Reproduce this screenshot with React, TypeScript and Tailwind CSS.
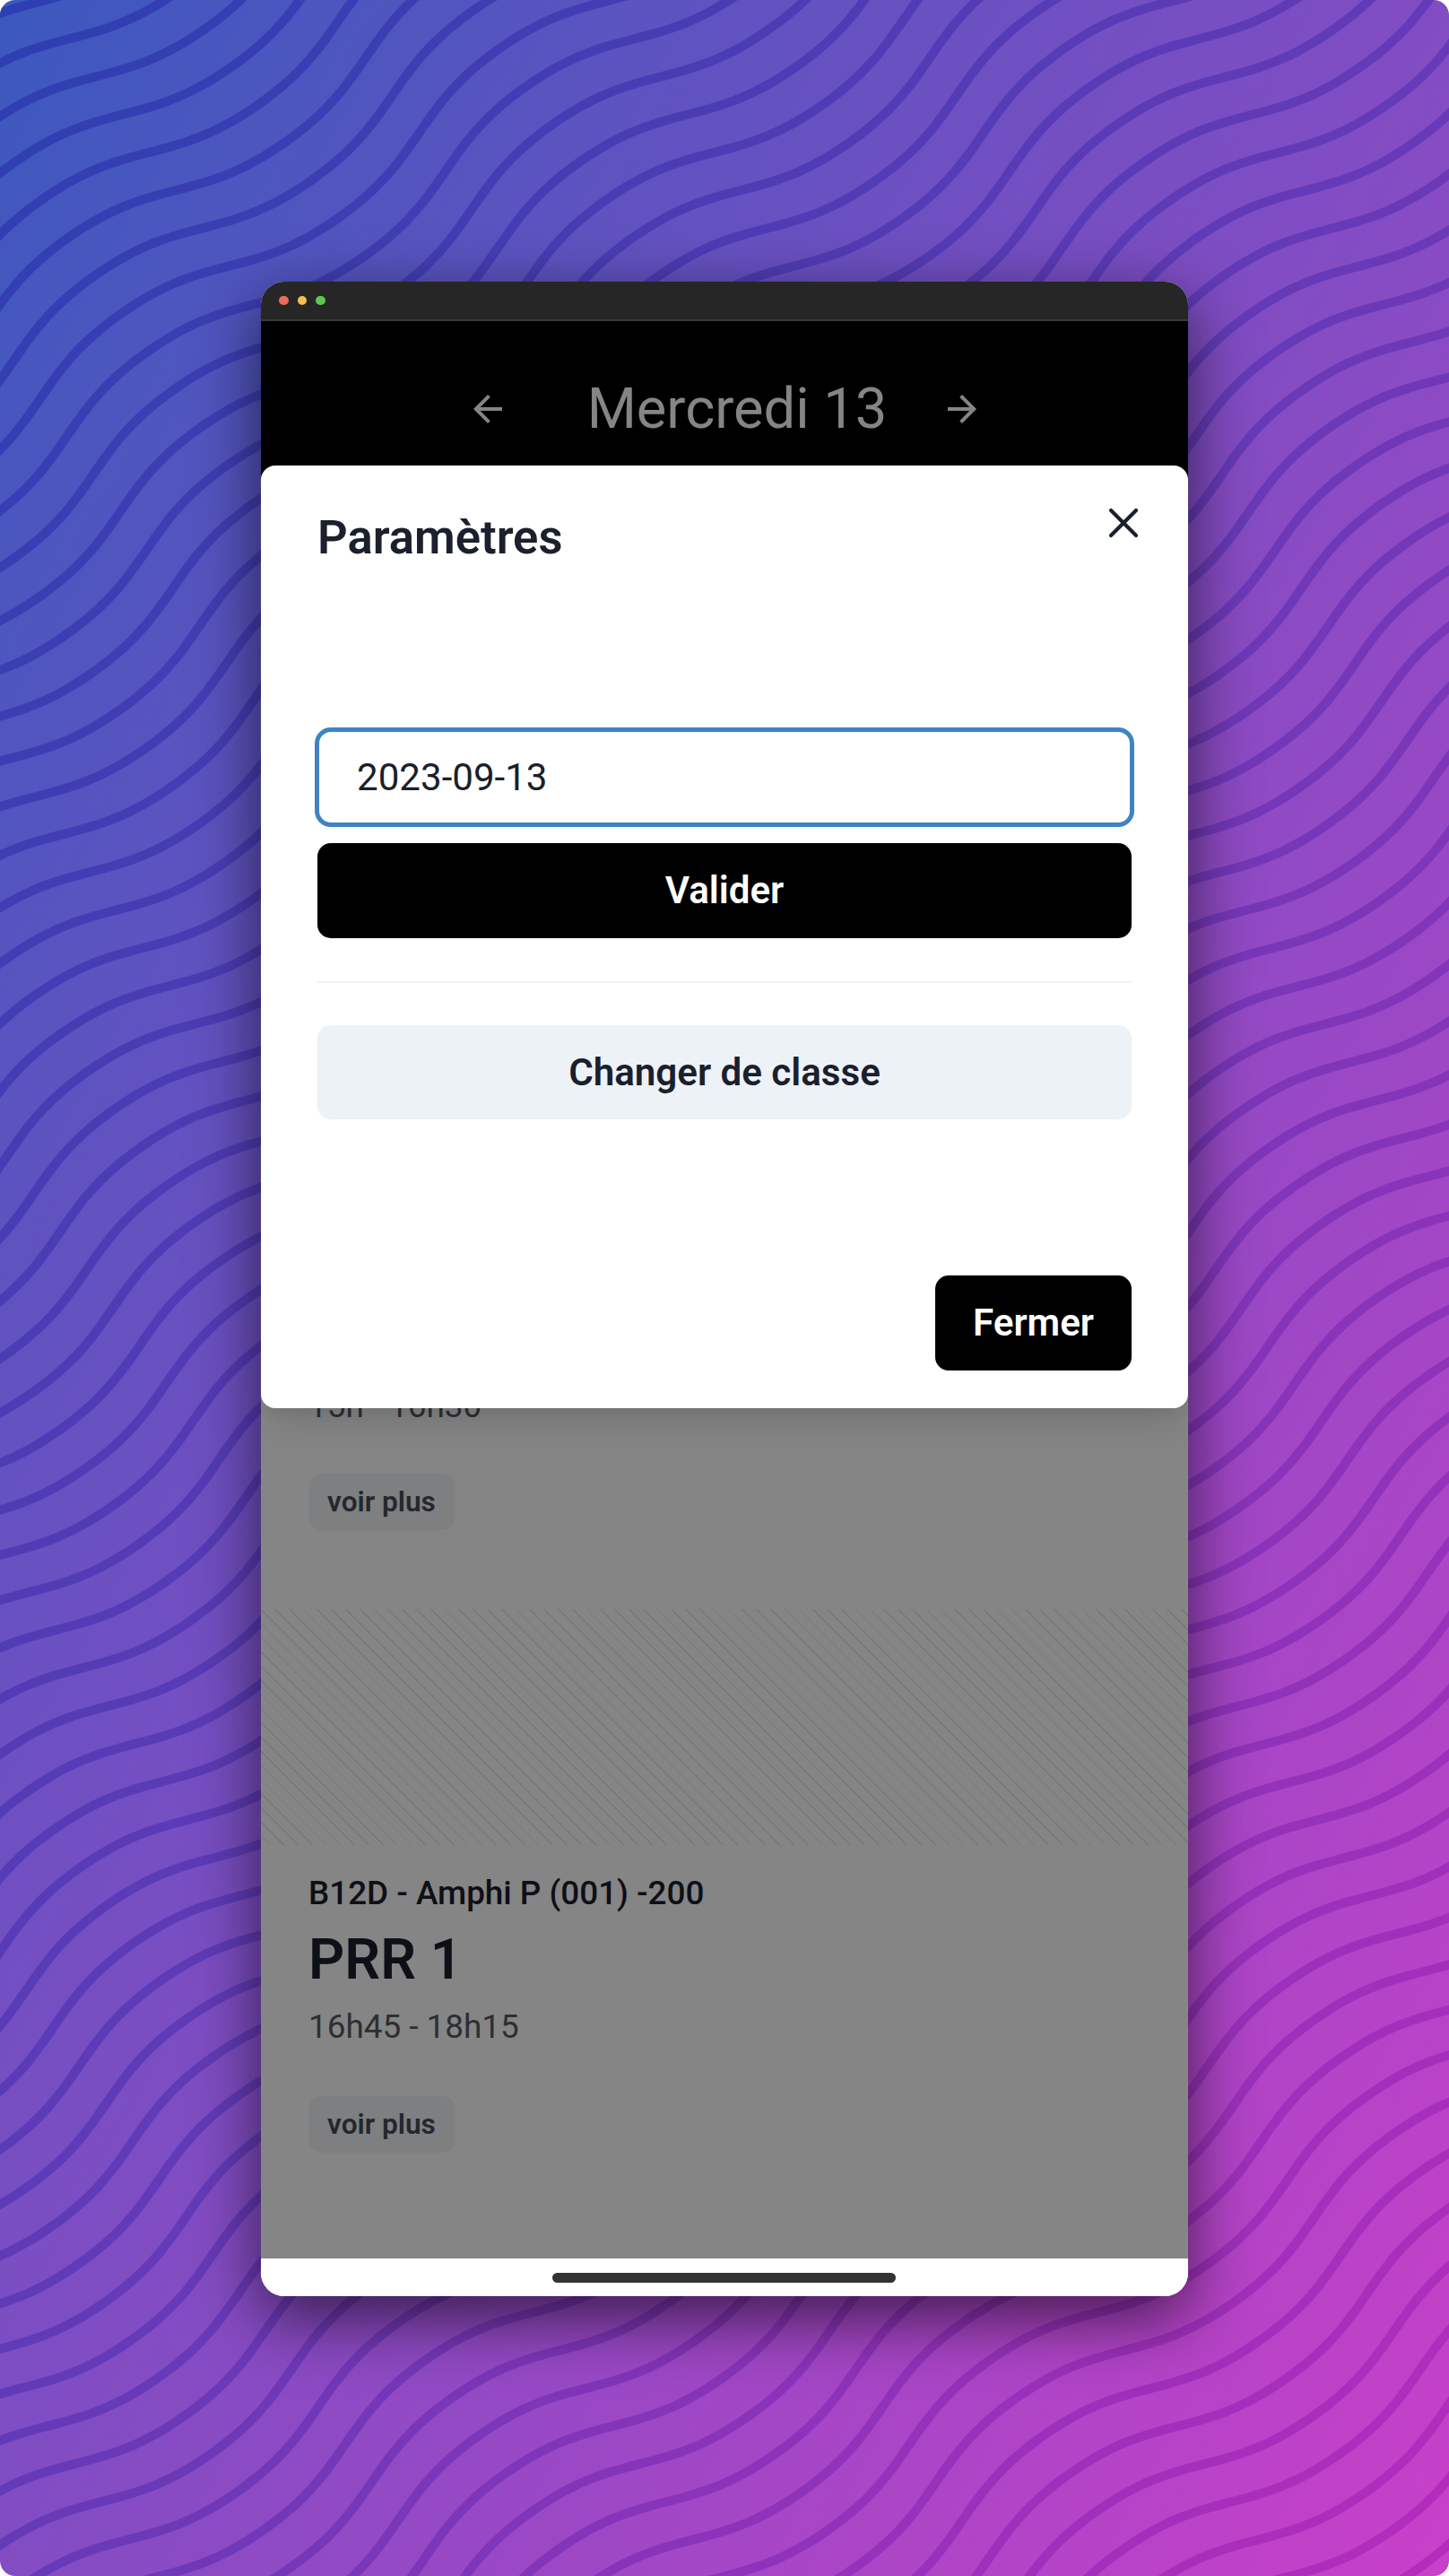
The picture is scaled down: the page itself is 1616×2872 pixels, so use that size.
const WIDTH = 1616;
const HEIGHT = 2872;
const PERIOD = 515.2;
const SPACING = 51.59;
const ANGLE = (35 * Math.PI) / 180;
const ORIGIN = { x: 137.7, y: 127.4 };

/** One wavy line, `index` rows away from the origin, in page coordinates. */
function wavePath(index: number) {
  const cos = Math.cos(ANGLE);
  const sin = Math.sin(ANGLE);
  let d = "";
  for (let u = -1900; u <= 1500; u += 10) {
    const k = (2 * Math.PI * u) / PERIOD;
    const v = index * SPACING + 27 * Math.sin(k) + 1.2 * Math.sin(3 * k);
    const x = ORIGIN.x + u * cos + v * sin;
    const y = ORIGIN.y - u * sin + v * cos;
    d += `${d ? "L" : "M"}${x.toFixed(1)} ${y.toFixed(1)}`;
  }
  return d;
}

const WAVES = Array.from({ length: 72 }, (_, i) => wavePath(i - 6));

function Backdrop() {
  return (
    <svg
      className="absolute inset-0"
      width={WIDTH}
      height={HEIGHT}
      viewBox={`0 0 ${WIDTH} ${HEIGHT}`}
      aria-hidden="true"
    >
      <defs>
        <linearGradient
          id="wave"
          gradientUnits="userSpaceOnUse"
          x1="-419.7"
          y1="745.3"
          x2="2035.7"
          y2="2126.7"
        >
          <stop offset="0" stopColor="#2c3fb2" />
          <stop offset="0.5" stopColor="#653ab8" />
          <stop offset="1" stopColor="#b62cbd" />
        </linearGradient>
      </defs>
      <g fill="none" stroke="url(#wave)" strokeWidth="10.2">
        {WAVES.map((d, i) => (
          <path key={i} d={d} />
        ))}
      </g>
    </svg>
  );
}

function TitleBar() {
  return (
    <div className="flex h-[44px] shrink-0 items-center gap-[10px] border-b-2 border-[#3a3a3a] bg-[#262626] pl-5">
      <span className="size-[10.5px] rounded-full bg-[#ec6a5e]" />
      <span className="size-[10.5px] rounded-full bg-[#f4be4f]" />
      <span className="size-[10.5px] rounded-full bg-[#61c554]" />
    </div>
  );
}

function DayHeader() {
  return (
    <header className="flex h-[196px] shrink-0 items-center justify-center bg-black text-white">
      <svg className="size-12" viewBox="0 0 24 24" fill="currentColor">
        <path d="M20 11H7.83l5.59-5.59L12 4l-8 8 8 8 1.41-1.41L7.83 13H20v-2z" />
      </svg>
      <h1 className="w-[481px] pb-[3px] pl-[28px] text-center text-[63.2px] leading-[76px] font-normal">
        Mercredi 13
      </h1>
      <svg className="size-12" viewBox="0 0 24 24" fill="currentColor">
        <path d="M12 4l-1.41 1.41L16.17 11H4v2h12.17l-5.58 5.59L12 20l8-8z" />
      </svg>
    </header>
  );
}

function MoreButton() {
  return (
    <button className="ml-[53px] flex h-[63px] w-[164px] items-center justify-center rounded-[15px] bg-[#f1f4f7] pr-[1px] text-[31.6px] leading-[38px] font-semibold text-[#464c56]">
      voir plus
    </button>
  );
}

function Schedule() {
  return (
    <main className="flex flex-col bg-white pt-[986px]">
      <p className="ml-[53px] text-[36.85px] leading-[56px] text-[#555a62]">15h - 16h30</p>
      <div className="mt-[47px]">
        <MoreButton />
      </div>
      <div className="mt-[88px] h-[263px] bg-[repeating-linear-gradient(45deg,transparent_0px,transparent_6.4px,#e6e6e6_6.4px,#e6e6e6_7.6px,transparent_7.6px,transparent_11.17px)]" />
      <p className="mt-[30px] ml-[53px] text-[36.85px] leading-[48px] font-medium text-[#1a202c]">
        B12D - Amphi P (001) -200
      </p>
      <h2 className="mt-[12px] ml-[53px] text-[62.8px] leading-[76px] font-semibold text-[#1a202c]">
        PRR 1
      </h2>
      <p className="mt-[9px] ml-[53px] text-[36.85px] leading-[56px] text-[#555a62]">
        16h45 - 18h15
      </p>
      <div className="mt-[49px]">
        <MoreButton />
      </div>
    </main>
  );
}

function SettingsDialog() {
  return (
    <section
      role="dialog"
      className="absolute top-[161px] right-0 left-0 flex h-[1050.5px] flex-col rounded-[16px] bg-white px-[63px] text-[42.1px] text-[#1a202c] shadow-[0_26px_39px_-8px_rgba(0,0,0,0.1),0_11px_16px_-5px_rgba(0,0,0,0.05)]"
    >
      <h2 className="mt-[45px] text-[52.6px] leading-[70px] font-semibold">Paramètres</h2>
      <button className="absolute top-[46px] right-[54px]" aria-label="Fermer la fenêtre">
        <svg
          width="36"
          height="36"
          viewBox="0 0 36 36"
          fill="none"
          stroke="currentColor"
          strokeWidth="4.2"
          strokeLinecap="round"
        >
          <path d="M4 4L32 32M32 4L4 32" />
        </svg>
      </button>
      <div className="-mx-[3px] mt-[177px] flex h-[111px] items-center rounded-[18px] border-[5px] border-[#3f83c3] pl-[42px] leading-[50px]">
        2023-09-13
      </div>
      <button className="mt-[18px] h-[106px] rounded-[15px] bg-black leading-[50px] font-semibold text-white">
        Valider
      </button>
      <hr className="mt-[48px] h-[2px] border-0 bg-[#f0f2f4]" />
      <button className="mt-[47px] h-[105px] rounded-[15px] bg-[#edf2f7] leading-[50px] font-semibold">
        Changer de classe
      </button>
      <button className="mt-[174px] h-[106px] w-[219px] self-end rounded-[15px] bg-black leading-[50px] font-semibold text-white">
        Fermer
      </button>
    </section>
  );
}

export default function App() {
  return (
    <div className="bg-white font-[Roboto,sans-serif]">
      <div className="relative flex h-[2872px] w-[1616px] justify-center overflow-hidden rounded-[17px] bg-linear-to-br/srgb from-[#3c59be] to-[#c840c9] pt-[314px]">
        <Backdrop />
        <div className="relative h-[2246px] w-[1034px] rounded-[26px] shadow-[0_24px_74px_rgba(0,0,0,0.62)]">
          <div className="flex h-full flex-col overflow-hidden rounded-[26px] bg-white">
            <TitleBar />
            <div className="relative flex h-[2160px] shrink-0 flex-col overflow-hidden bg-white">
              <DayHeader />
              <Schedule />
              <div className="absolute inset-0 bg-black/48" />
              <SettingsDialog />
            </div>
            <div className="flex flex-1 items-center justify-center bg-white pt-[1px] pr-[2px]">
              <div className="h-[11px] w-[383px] rounded-full bg-[#333333]" />
            </div>
          </div>
        </div>
      </div>
    </div>
  );
}
